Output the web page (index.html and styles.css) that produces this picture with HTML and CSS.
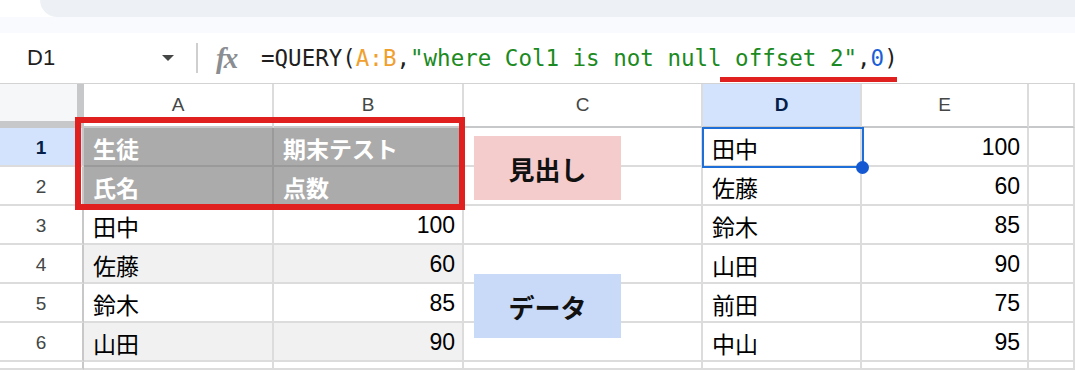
FILE: index.html
```html
<html>
<head>
  <title>QUERY offset</title>
  <meta http-equiv="Content-Type" content="text/html; charset=utf-8" />
  <link rel="stylesheet" href="styles.css">
</head>
<body>

<div class="topbar"><div class="band"></div></div>
<div class="subbar"></div>

<div class="formula">
  <div class="namebox">D1</div>
  <div class="caret"></div>
  <div class="sep"></div>
  <div class="fx">fx</div>
  <div class="expr">=QUERY(<span class="ref">A:B</span>,<span class="str">"where Col1 is not null offset 2"</span>,<span class="num">0</span>)</div>
  <div class="mark"></div>
</div>

<div class="sheet">
  <div class="grid">
    <!-- header row -->
    <div class="corner"></div>
    <div class="colhead">A</div>
    <div class="colhead">B</div>
    <div class="colhead">C</div>
    <div class="colhead active">D</div>
    <div class="colhead">E</div>
    <div class="colhead"></div>

    <div class="rowhead active">1</div>
    <div class="cell head">生徒</div>
    <div class="cell head">期末テスト</div>
    <div class="cell"></div>
    <div class="cell">田中</div>
    <div class="cell right">100</div>
    <div class="cell"></div>

    <div class="rowhead">2</div>
    <div class="cell head">氏名</div>
    <div class="cell head">点数</div>
    <div class="cell"></div>
    <div class="cell">佐藤</div>
    <div class="cell right">60</div>
    <div class="cell"></div>

    <div class="rowhead">3</div>
    <div class="cell">田中</div>
    <div class="cell right">100</div>
    <div class="cell"></div>
    <div class="cell">鈴木</div>
    <div class="cell right">85</div>
    <div class="cell"></div>

    <div class="rowhead">4</div>
    <div class="cell band2">佐藤</div>
    <div class="cell band2 right">60</div>
    <div class="cell"></div>
    <div class="cell">山田</div>
    <div class="cell right">90</div>
    <div class="cell"></div>

    <div class="rowhead">5</div>
    <div class="cell">鈴木</div>
    <div class="cell right">85</div>
    <div class="cell"></div>
    <div class="cell">前田</div>
    <div class="cell right">75</div>
    <div class="cell"></div>

    <div class="rowhead">6</div>
    <div class="cell band2">山田</div>
    <div class="cell band2 right">90</div>
    <div class="cell"></div>
    <div class="cell">中山</div>
    <div class="cell right">95</div>
    <div class="cell"></div>

    <div class="rowhead"></div>
    <div class="cell"></div>
    <div class="cell"></div>
    <div class="cell"></div>
    <div class="cell"></div>
    <div class="cell"></div>
    <div class="cell"></div>
  </div>

  <!-- drawings over the grid -->
  <div class="frame"></div>
  <div class="label heading">見出し</div>
  <div class="label data">データ</div>
  <div class="selection"></div>
  <div class="handle"></div>
</div>

</body>
</html>
```

FILE: styles.css
```css
html, body {
  margin: 0px;
  padding: 0px;
  height: 370px;
  background: #fff;
  overflow: hidden;
  font-family: "Liberation Sans", "Noto Sans CJK JP", sans-serif;
  color: #000;
}

.topbar { height: 17px; background: #fff; }
.topbar .band {
  height: 17px; margin-left: 40px;
  background: #edf1f6;
  border-bottom-left-radius: 18px;
}
.subbar { height: 16px; background: #f8fafd; }

.formula {
  position: relative;
  height: 50px;
  border-bottom: 1px solid #d3d3d3;
  display: flex; align-items: center;
}
.namebox { width: 125px; padding-left: 27px; font-size: 22px; color: #1f1f1f; }
.caret {
  width: 0; height: 0; margin-left: 10px;
  border-left: 6px solid transparent; border-right: 6px solid transparent;
  border-top: 6px solid #444746;
}
.sep { width: 2px; height: 30px; background: #cfcfcf; margin-left: 22px; }
.fx {
  margin-left: 18px; width: 45px;
  font: italic bold 29px "Liberation Serif", serif;
  color: #8a8d91; letter-spacing: -2px;
}
.expr {
  font: 22.5px "DejaVu Sans Mono", monospace;
  color: #1f1f1f; white-space: nowrap;
}
.expr .ref { color: #f0a02f; }
.expr .str { color: #1b8a22; }
.expr .num { color: #1a5fd8; }
.mark {
  position: absolute; left: 720px; top: 44px;
  width: 177px; height: 5px; background: #e0201f;
}

.sheet { position: relative; }
.grid {
  display: grid;
  grid-template-columns: 84px 190px 190px 239px 159px 167px 1fr;
  grid-template-rows: 44px repeat(6, 39px) 8px;
}
.grid > div { box-sizing: border-box; }

.corner {
  background: #f6f7f8;
  border-right: 7px solid #c6c8c9;
  border-bottom: 7px solid #c6c8c9;
}
.colhead {
  border-right: 2px solid #dcdcdc;
  border-bottom: 2px solid #c6c8c9;
  display: flex; align-items: center; justify-content: center;
  font-size: 19px; color: #444746;
}
.colhead.active { background: #d3e3fd; color: #041e49; font-weight: bold; }

.rowhead {
  border-right: 2px solid #c8c8c8;
  border-bottom: 2px solid #dcdcdc;
  display: flex; align-items: center; justify-content: center;
  padding-top: 2px;
  font-size: 19px; color: #444746;
}
.rowhead.active { background: #d3e3fd; color: #041e49; font-weight: bold; }

.cell {
  border-right: 2px solid #dcdcdc;
  border-bottom: 2px solid #dcdcdc;
  display: flex; align-items: center;
  padding: 2px 7px 0 9px;
  font-size: 23px; white-space: nowrap; overflow: hidden;
}
.cell.right { justify-content: flex-end; }
.cell.band2 { background: #f1f1f1; }
.cell.head {
  background: #ababab; color: #fff; font-weight: bold;
  border-color: #9a9a9a;
}

.frame {
  position: absolute; left: 75px; top: 33px;
  width: 390px; height: 93px; box-sizing: border-box;
  border: 6px solid #e0201f;
}
.label {
  position: absolute; left: 474px; width: 147px; height: 64px;
  display: flex; align-items: center; justify-content: center;
  font-size: 26px; font-weight: bold; color: #111;
}
.label.heading { top: 52px; background: #f4cccc; }
.label.data { top: 190px; background: #c9daf8; }

.selection {
  position: absolute; left: 702px; top: 43px;
  width: 162px; height: 41px; box-sizing: border-box;
  border: 2px solid #1f6fd8;
}
.handle {
  position: absolute; left: 856px; top: 77px;
  width: 13px; height: 13px; border-radius: 50%;
  background: #1459d2;
}
```
